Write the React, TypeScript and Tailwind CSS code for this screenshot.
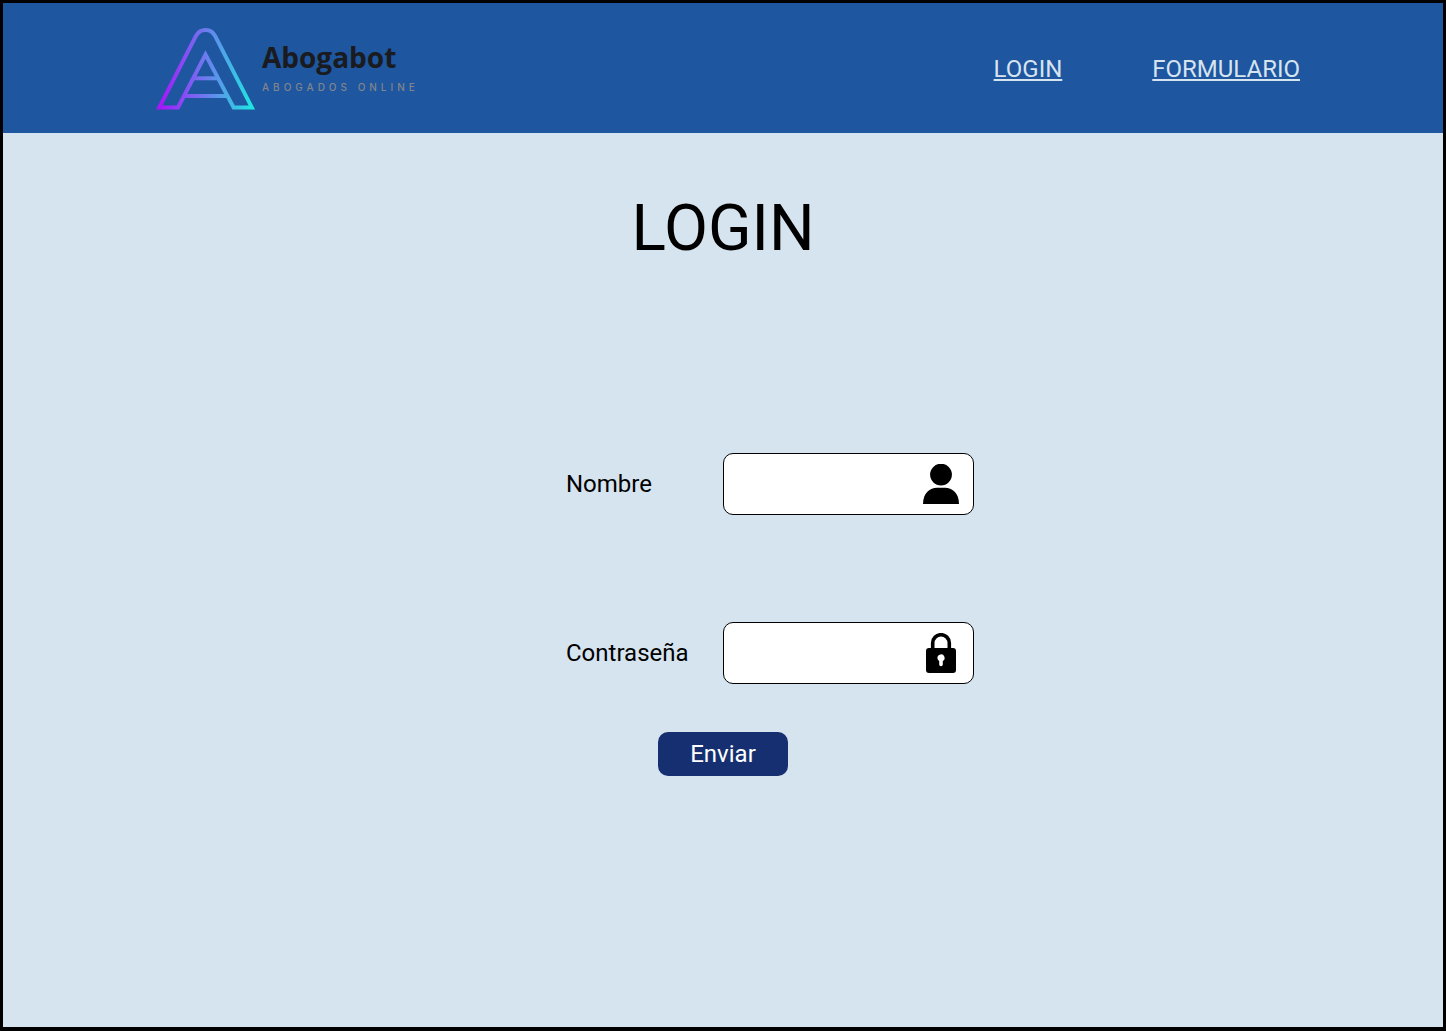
import type { ReactNode } from "react";

function LogoMark() {
  return (
    <svg viewBox="0 0 100 84" className="h-[84px] w-[100px] shrink-0" aria-hidden="true">
      <defs>
        <linearGradient id="mark" gradientUnits="userSpaceOnUse" x1="4" y1="0" x2="96" y2="0">
          <stop offset="0" stopColor="#a716fb" />
          <stop offset="0.5" stopColor="#6c7cee" />
          <stop offset="1" stopColor="#1ee6e0" />
        </linearGradient>
      </defs>
      <g fill="none" stroke="url(#mark)" strokeWidth="4" strokeMiterlimit="10">
        <path d="M3.3 80.4 L39.8 9.2 C43.8 .8 55.2 .8 59.2 9.2 L95.8 80.4 H77.6 L49.5 27.6 L22 80.4 Z" />
        <path d="M38 51.3 H61" />
        <path d="M29 69 H71" />
      </g>
    </svg>
  );
}

function UserIcon() {
  return (
    <svg viewBox="0 0 36 40" className="h-10 w-9" aria-hidden="true">
      <circle cx="18" cy="10.6" r="10.9" />
      <path d="M0 40 C0 29 7 23.7 14 23.7 H22 C29 23.7 36 29 36 40 Z" />
    </svg>
  );
}

function LockIcon() {
  return (
    <svg viewBox="0 0 30 40" className="h-10 w-[30px]" aria-hidden="true">
      <path d="M6.7 16 V10 A8.3 8.3 0 0 1 23.3 10 V16" fill="none" stroke="#000" strokeWidth="3.6" />
      <rect y="15" width="30" height="25" rx="3" />
      <path d="M11.4 25 A3.6 3.6 0 1 1 16.8 28.1 V31.4 A1.8 1.8 0 0 1 13.2 31.4 V28.1 A3.6 3.6 0 0 1 11.4 25 Z" fill="#fff" />
    </svg>
  );
}

type FieldProps = { id: string; label: string; type: string; icon: ReactNode };

function Field({ id, label, type, icon }: FieldProps) {
  return (
    <div className="grid w-full grid-cols-2 items-center">
      <label htmlFor={id} className="w-[157px] justify-self-end text-2xl">
        {label}
      </label>
      <div className="relative w-[251px]">
        <input
          id={id}
          name={id}
          type={type}
          className="block h-[62px] w-full rounded-[10px] border border-black bg-white pr-16 pl-4 text-2xl"
        />
        <span className="pointer-events-none absolute inset-y-0 right-[15px] flex w-9 items-center justify-center">
          {icon}
        </span>
      </div>
    </div>
  );
}

export default function App() {
  return (
    <div className="flex min-h-screen flex-col border-[3px] border-b-4 border-black bg-[#d6e4ef] font-[Roboto,sans-serif] text-black">
      <header className="flex h-[130px] items-center justify-between bg-[#1e569f] pt-0.5 pr-[143px] pl-[153px]">
        <a href="#inicio" className="flex items-center gap-1.5">
          <LogoMark />
          <span className="flex flex-col gap-1 pb-1 font-['Open_Sans',sans-serif]">
            <span className="text-[28px] leading-9 font-bold text-[#1a1b1e]">Abogabot</span>
            <span className="font-[Inter,sans-serif] text-[10px] leading-4 font-medium tracking-[4px] text-[#82858d]">
              ABOGADOS ONLINE
            </span>
          </span>
        </a>
        <nav className="flex gap-[90px] text-2xl text-[#d6e4ef]">
          <a href="#login" className="underline [text-decoration-skip-ink:none]">LOGIN</a>
          <a href="#formulario" className="underline [text-decoration-skip-ink:none]">FORMULARIO</a>
        </nav>
      </header>
      <main className="flex flex-col items-center pt-[58px]">
        <h1 className="text-[64px] leading-[75px]">LOGIN</h1>
        <form className="mt-[187px] flex w-full flex-col items-center">
          <div className="flex w-full flex-col gap-[107px]">
            <Field id="nombre" label="Nombre" type="text" icon={<UserIcon />} />
            <Field id="contrasena" label="Contraseña" type="password" icon={<LockIcon />} />
          </div>
          <button type="button" className="mt-12 h-11 w-[130px] rounded-[10px] bg-[#162f70] text-2xl text-white">
            Enviar
          </button>
        </form>
      </main>
    </div>
  );
}
